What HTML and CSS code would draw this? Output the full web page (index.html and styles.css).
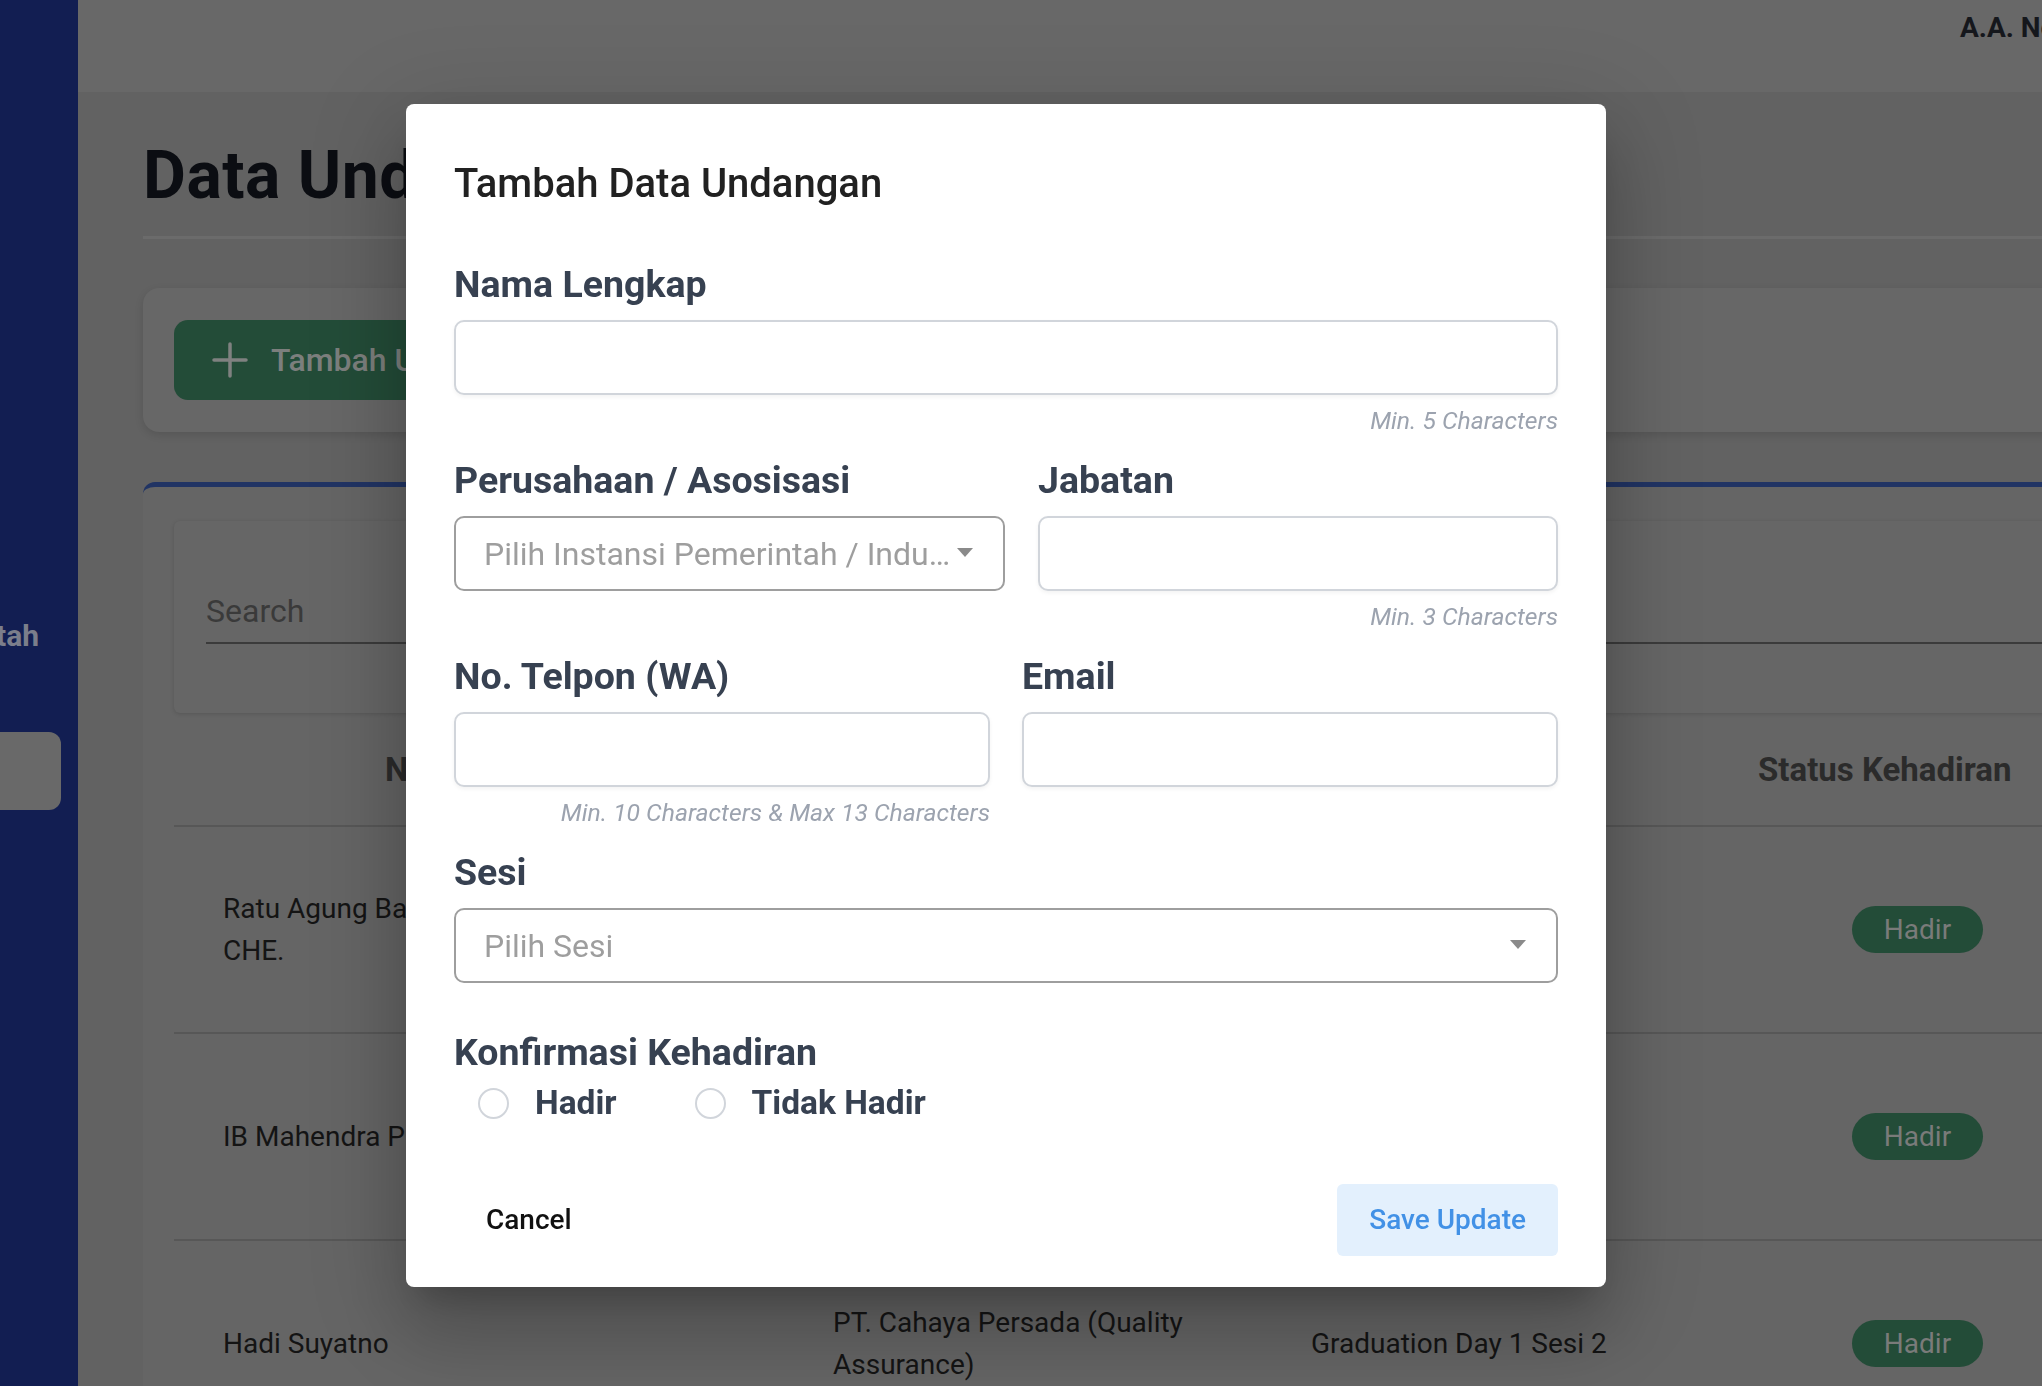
FILE: index.html
```html
<!DOCTYPE html>
<html lang="id">
<head>
<meta charset="utf-8">
<title>Data Undangan</title>
<link rel="stylesheet" href="styles.css">
</head>
<body>
<div class="app">
  <aside class="sidebar">
    <nav class="nav">
      <div class="nav-item"><span class="nav-label">Instansi Pemerintah</span></div>
      <div class="nav-item nav-active"></div>
    </nav>
  </aside>
  <div class="main">
    <header class="topbar"><span class="user-name">A.A. Ngurah Agung</span></header>
    <section class="content">
      <h1 class="page-title">Data Undangan</h1>
      <div class="toolbar-card">
        <button class="btn-add" type="button">
          <svg class="plus" width="36" height="36" viewBox="0 0 36 36"><path d="M18 2v32M2 18h32" stroke="#7f8180" stroke-width="3.5" stroke-linecap="round" fill="none"/></svg>
          <span>Tambah Undangan</span>
        </button>
      </div>
      <div class="table-card">
        <div class="search-box"><div class="search-field">Search</div></div>
        <div class="table">
          <div class="trow thead">
            <div class="cell c1 h1">Nama</div>
            <div class="cell c2">Perusahaan / Asosiasi</div>
            <div class="cell c3">Sesi</div>
            <div class="cell c4">Status Kehadiran</div>
          </div>
          <div class="trow tbody">
            <div class="cell c1">Ratu Agung Bagus Sudarma,<br>CHE.</div>
            <div class="cell c2">PT. Bali Sejahtera Abadi</div>
            <div class="cell c3">Graduation Day 1 Sesi 1</div>
            <div class="cell c4"><span class="badge">Hadir</span></div>
          </div>
          <div class="trow tbody">
            <div class="cell c1">IB Mahendra Putra</div>
            <div class="cell c2">PT. Nusa Dua Mandiri</div>
            <div class="cell c3">Graduation Day 1 Sesi 1</div>
            <div class="cell c4"><span class="badge">Hadir</span></div>
          </div>
          <div class="trow tbody">
            <div class="cell c1">Hadi Suyatno</div>
            <div class="cell c2">PT. Cahaya Persada (Quality<br>Assurance)</div>
            <div class="cell c3">Graduation Day 1 Sesi 2</div>
            <div class="cell c4"><span class="badge">Hadir</span></div>
          </div>
        </div>
      </div>
    </section>
  </div>
</div>

<div class="overlay">
  <div class="dialog">
    <h2 class="dialog-title">Tambah Data Undangan</h2>

    <div class="field">
      <label class="field-label">Nama Lengkap</label>
      <input class="input" type="text">
      <div class="hint">Min. 5 Characters</div>
    </div>

    <div class="row row-a">
      <div class="field">
        <label class="field-label">Perusahaan / Asosisasi</label>
        <div class="select">
          <span class="select-text">Pilih Instansi Pemerintah / Industri / Asosiasi</span>
          <span class="caret"></span>
        </div>
      </div>
      <div class="field">
        <label class="field-label">Jabatan</label>
        <input class="input" type="text">
        <div class="hint">Min. 3 Characters</div>
      </div>
    </div>

    <div class="row row-b">
      <div class="field">
        <label class="field-label">No. Telpon (WA)</label>
        <input class="input" type="text">
        <div class="hint">Min. 10 Characters &amp; Max 13 Characters</div>
      </div>
      <div class="field">
        <label class="field-label">Email</label>
        <input class="input" type="text">
      </div>
    </div>

    <div class="field field-sesi">
      <label class="field-label">Sesi</label>
      <div class="select">
        <span class="select-text">Pilih Sesi</span>
        <span class="caret"></span>
      </div>
    </div>

    <div class="field field-konfirmasi">
      <label class="field-label">Konfirmasi Kehadiran</label>
      <div class="radio-group">
        <label class="radio-option"><input class="radio" type="radio" name="hadir"><span>Hadir</span></label>
        <label class="radio-option"><input class="radio" type="radio" name="hadir"><span>Tidak Hadir</span></label>
      </div>
    </div>

    <div class="actions">
      <button class="btn btn-cancel" type="button">Cancel</button>
      <button class="btn btn-save" type="button">Save Update</button>
    </div>
  </div>
</div>
</body>
</html>
```

FILE: styles.css
```css
* { box-sizing: border-box; margin: 0; padding: 0; }

html, body {
  width: 2042px;
  height: 1386px;
  overflow: hidden;
}

body {
  font-family: Roboto, "Noto Sans", "Liberation Sans", sans-serif;
  background: #626262;
  color: #141414;
}

.app {
  display: flex;
  height: 1386px;
}

/* ---------- sidebar ---------- */
.sidebar {
  width: 78px;
  flex: none;
  background: #121e52;
  overflow: hidden;
}

.nav {
  display: flex;
  flex-direction: column;
  padding-top: 616px;
}

.nav-item {
  height: 40px;
  display: flex;
  justify-content: flex-end;
  padding-right: 39px;
  white-space: nowrap;
  font-size: 30px;
  font-weight: 700;
  line-height: 40px;
  color: #7b7e8b;
}

.nav-active {
  margin-top: 76px;
  width: 61px;
  height: 78px;
  padding: 0;
  background: #696969;
  border-radius: 0 12px 12px 0;
}

/* ---------- main ---------- */
.main {
  flex: 1;
  min-width: 0;
  display: flex;
  flex-direction: column;
  overflow: hidden;
}

.topbar {
  height: 92px;
  flex: none;
  background: #686868;
  display: flex;
  justify-content: flex-end;
  padding-top: 11px;
}

.user-name {
  width: 82px;
  white-space: nowrap;
  font-size: 28px;
  font-weight: 700;
  line-height: 34px;
  color: #15171c;
}

.content {
  width: 2200px;
  padding: 45px 0 0 65px;
}

.page-title {
  font-size: 66px;
  font-weight: 700;
  line-height: 78px;
  color: #0b0d12;
  letter-spacing: 0.5px;
  padding-bottom: 21px;
  border-bottom: 3px solid #6b6b6b;
}

.toolbar-card {
  margin-top: 49px;
  background: #676767;
  border-radius: 16px;
  padding: 32px 31px;
  box-shadow: 0 3px 8px rgba(0, 0, 0, 0.12);
}

.btn-add {
  display: inline-flex;
  align-items: center;
  gap: 23px;
  height: 80px;
  padding: 0 40px 0 38px;
  background: #234c38;
  border: none;
  border-radius: 14px;
  font-family: inherit;
  font-size: 32px;
  font-weight: 500;
  color: #7c7f7d;
}

.plus { flex: none; }

.table-card {
  margin-top: 50px;
  background: #656565;
  border-top: 5px solid #213464;
  border-radius: 12px 0 0 0;
  padding: 34px 0 0 31px;
}

.search-box {
  height: 192px;
  background: #666666;
  border-radius: 6px;
  box-shadow: 0 1px 4px rgba(0, 0, 0, 0.15);
  padding: 70px 0 0 32px;
}

.search-field {
  font-size: 32px;
  line-height: 40px;
  color: #3a3a3a;
  padding-bottom: 11px;
  border-bottom: 2px solid #3b3b3b;
}

.trow {
  display: grid;
  grid-template-columns: 626px 480px 450px 460px;
  align-items: center;
  border-bottom: 2px solid #575757;
}

.thead {
  height: 114px;
  font-size: 33px;
  font-weight: 700;
  color: #2b2b2b;
}

.tbody {
  height: 207px;
  font-size: 28px;
  line-height: 42px;
  color: #141414;
}

.c1 { padding-left: 49px; }
.h1 { padding-left: 211px; }
.c2 { padding-left: 33px; }
.c3 { padding-left: 31px; }
.c4 { padding-left: 28px; }
.tbody .c4 { padding-left: 122px; }

.badge {
  display: inline-block;
  width: 131px;
  height: 47px;
  border-radius: 24px;
  background: #234c38;
  color: #7a7b7a;
  font-size: 28px;
  line-height: 47px;
  text-align: center;
}

/* ---------- dialog ---------- */
.overlay {
  position: fixed;
  inset: 0;
  display: flex;
  align-items: flex-start;
  padding: 104px 0 0 406px;
}

.dialog {
  width: 1200px;
  background: #ffffff;
  border-radius: 8px;
  padding: 56px 48px 31px;
  box-shadow: 0 22px 30px -14px rgba(0, 0, 0, 0.2),
              0 48px 76px 6px rgba(0, 0, 0, 0.14),
              0 18px 92px 16px rgba(0, 0, 0, 0.12);
}

.dialog-title {
  font-size: 40px;
  font-weight: 500;
  line-height: 48px;
  color: #212121;
  margin-bottom: 54px;
}

.field { display: flex; flex-direction: column; min-width: 0; }

.field-label {
  display: block;
  font-size: 37.5px;
  font-weight: 700;
  line-height: 44px;
  color: #374151;
  margin-bottom: 14px;
}

.input {
  display: block;
  width: 100%;
  height: 75px;
  border: 2px solid #d1d5db;
  border-radius: 10px;
  background: #fff;
  box-shadow: 0 2px 4px rgba(0, 0, 0, 0.05);
  outline: none;
  font-family: inherit;
}

.hint {
  margin-top: 10px;
  text-align: right;
  font-size: 24.7px;
  font-style: italic;
  line-height: 32px;
  color: #9ca3af;
}

.row {
  display: grid;
  margin-top: 21px;
}

.row-a {
  grid-template-columns: 551px 520px;
  column-gap: 33px;
}

.row-b {
  grid-template-columns: 1fr 1fr;
  column-gap: 32px;
}

.select {
  display: flex;
  align-items: center;
  height: 75px;
  border: 2px solid #9e9e9e;
  border-radius: 10px;
  padding: 0 30px 0 28px;
}

.select-text {
  flex: 1;
  min-width: 0;
  overflow: hidden;
  white-space: nowrap;
  text-overflow: ellipsis;
  font-size: 32px;
  line-height: 40px;
  color: #9e9e9e;
}

.caret {
  flex: none;
  margin-left: 4px;
  margin-top: -2px;
  width: 0;
  height: 0;
  border-left: 8px solid transparent;
  border-right: 8px solid transparent;
  border-top: 9px solid #8a8a8a;
}

.field-sesi { margin-top: 21px; }

.field-konfirmasi { margin-top: 47px; }

.field-konfirmasi .field-label { margin-bottom: 9px; }

.radio-group {
  display: flex;
  align-items: center;
  height: 40px;
  padding-left: 24px;
}

.radio-option {
  display: flex;
  align-items: center;
  gap: 26px;
  font-size: 33.5px;
  font-weight: 700;
  line-height: 40px;
  color: #374151;
}

.radio-option + .radio-option { margin-left: 78px; }

.radio {
  appearance: none;
  -webkit-appearance: none;
  width: 31px;
  height: 31px;
  border: 2px solid #d1d5db;
  border-radius: 50%;
  background: #fff;
  margin: 0;
  flex: none;
}

.actions {
  display: flex;
  justify-content: space-between;
  margin-top: 61px;
}

.btn {
  height: 72px;
  padding: 0 32px;
  border: none;
  border-radius: 6px;
  background: transparent;
  font-family: inherit;
  font-size: 28px;
  font-weight: 500;
  line-height: 1;
}

.btn-cancel { color: #111111; }

.btn-save {
  background: #e3f0fd;
  color: #4291e6;
}
```
